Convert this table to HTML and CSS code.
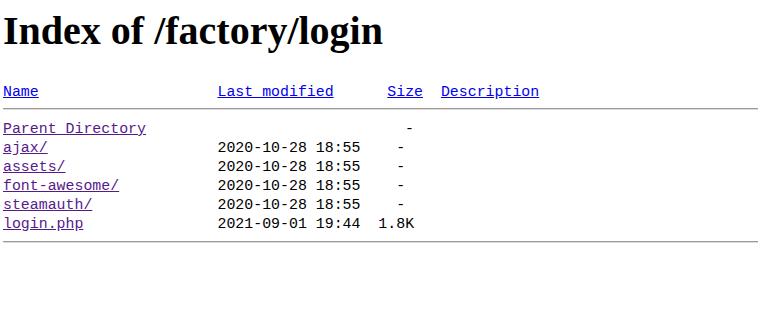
FILE: index.html
```html
<!DOCTYPE html>
<html>
<head>
<meta charset="utf-8">
<title>Index of /factory/login</title>
<link rel="stylesheet" href="styles.css">
</head>
<body>
<h1 class="title">Index of /factory/login</h1>
<pre class="listing"><a class="sort" href="#">Name</a>                    <a class="sort" href="#">Last modified</a>      <a class="sort" href="#">Size</a>  <a class="sort" href="#">Description</a><hr class="rule rule-top"><a class="entry" href="#">Parent Directory</a>                             -   
<a class="entry" href="#">ajax/</a>                   2020-10-28 18:55    -   
<a class="entry" href="#">assets/</a>                 2020-10-28 18:55    -   
<a class="entry" href="#">font-awesome/</a>           2020-10-28 18:55    -   
<a class="entry" href="#">steamauth/</a>              2020-10-28 18:55    -   
<a class="entry" href="#">login.php</a>               2021-09-01 19:44  1.8K  
<hr class="rule rule-bottom"></pre>
</body>
</html>
```
FILE: styles.css
```css
html, body {
  background: #ffffff;
}
body {
  margin: 0 0 0 3px;
  color: #000000;
  font-family: "Liberation Serif", "Times New Roman", serif;
}
.title {
  font-family: "Liberation Serif", "Times New Roman", serif;
  font-weight: bold;
  font-size: 40px;
  line-height: 46px;
  margin: 8px 0 29px 0;
}
.listing {
  margin: 0;
  font-family: "Liberation Mono", "Courier New", monospace;
  font-size: 14.9px;
  line-height: 19px;
  white-space: pre;
}
.sort {
  color: #0000ee;
}
.entry {
  color: #551a8b;
}
.rule {
  height: 0;
  border: 0;
  border-top: 1px solid #9a9a9a;
  border-bottom: 1px solid #dcdcdc;
}
.rule-top {
  margin: 6px 0 10px 0;
}
.rule-bottom {
  margin: 7px 0 0 0;
}
```
